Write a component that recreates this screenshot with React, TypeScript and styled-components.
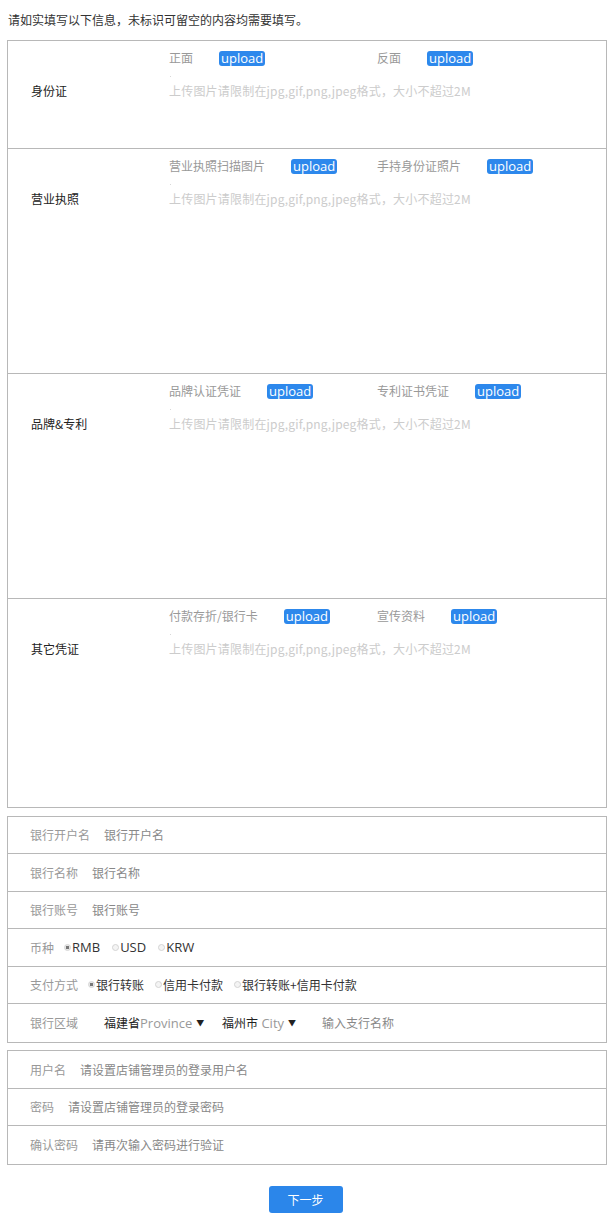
import React from "react";
import styled, { createGlobalStyle } from "styled-components";

const Global = createGlobalStyle`
  html, body { margin: 0; padding: 0; background: #fff; }
  body {
    font-family: "Microsoft YaHei", "Noto Sans CJK SC", "Noto Sans", sans-serif;
    font-size: 12px;
    color: #333;
  }
  * { box-sizing: border-box; }
`;

const Page = styled.div`
  width: 615px;
  padding: 12px 8px 0 7px;
`;

const Intro = styled.div`
  line-height: 16px;
  padding-left: 1px;
  margin-bottom: 12px;
  color: #333;
`;

const Panel = styled.div`
  border: 1px solid #b8b8b8;
  width: 600px;
  margin-bottom: 7.5px;
`;

const Section = styled.div<{ $h: number; $last?: boolean }>`
  display: grid;
  grid-template-columns: 161px 1fr;
  height: ${(p) => p.$h}px;
  border-bottom: ${(p) => (p.$last ? "none" : "1px solid #b8b8b8")};
`;

const SectionLabel = styled.div`
  padding-left: 23px;
  margin-top: 42px;
  line-height: 16px;
  color: #222;
`;

const SectionBody = styled.div`
  padding-top: 9px;
`;

const UploadRow = styled.div`
  display: flex;
  height: 16px;
  align-items: center;
`;

const UploadItem = styled.div`
  width: 208px;
  display: flex;
  align-items: center;
  gap: 26px;
`;

const ItemName = styled.span`
  color: #999;
  line-height: 16px;
`;

const UploadBtn = styled.span`
  display: inline-block;
  background: #2d88ec;
  color: #fff;
  font-family: "Open Sans", "Noto Sans", sans-serif;
  font-size: 13px;
  line-height: 15px;
  height: 15px;
  padding: 0 2px;
  border-radius: 3px;
`;

const Dot = styled.div`
  width: 1px;
  height: 1px;
  background: #d8d8d8;
  margin: 10px 0 6px 1px;
`;

const Hint = styled.div`
  color: #ccc;
  line-height: 16px;
  letter-spacing: 0.2px;
`;

const Row = styled.div<{ $h: number; $last?: boolean }>`
  display: flex;
  align-items: center;
  height: ${(p) => p.$h}px;
  padding-left: 22px;
  border-bottom: ${(p) => (p.$last ? "none" : "1px solid #b8b8b8")};
`;

const FieldLabel = styled.span<{ $gap?: number }>`
  color: #999;
  margin-right: ${(p) => p.$gap ?? 14}px;
`;

const FieldValue = styled.span`
  color: #888;
`;

const Radio = styled.span<{ $on?: boolean }>`
  display: inline-block;
  width: 7px;
  height: 7px;
  border-radius: 50%;
  border: 1px solid #d4d4d4;
  background: ${(p) => (p.$on ? "radial-gradient(circle, #777 0 1.6px, #e8e8e8 2px)" : "#f4f4f4")};
  margin-right: 1px;
`;

const Option = styled.span<{ $gap?: number }>`
  display: inline-flex;
  align-items: center;
  color: #333;
  margin-right: ${(p) => p.$gap ?? 12}px;
`;

const OptionText = styled.span<{ $latin?: boolean }>`
  font-family: ${(p) =>
    p.$latin ? '"Open Sans", "Noto Sans", sans-serif' : '"Noto Sans CJK SC", sans-serif'};
  font-size: ${(p) => (p.$latin ? "13px" : "12px")};
  color: #333;
`;

const Select = styled.span<{ $w: number }>`
  display: inline-flex;
  align-items: center;
  width: ${(p) => p.$w}px;
`;

const SelStrong = styled.span`
  color: #222;
`;

const SelLatin = styled.span`
  font-family: "Open Sans", "Noto Sans", sans-serif;
  font-size: 13px;
  color: #999;
`;

const Caret = styled.span`
  font-size: 8px;
  color: #222;
  margin-left: 4px;
`;

const Footer = styled.div`
  display: flex;
  justify-content: center;
  padding-top: 14px;
  padding-right: 3px;
`;

const NextBtn = styled.button`
  width: 74px;
  height: 27px;
  border: none;
  border-radius: 3px;
  background: #2b86ea;
  color: #fff;
  font-family: "Noto Sans CJK SC", sans-serif;
  font-size: 12px;
  padding: 0;
`;

type Doc = { label: string; h: number; items: [string, string] };

const docs: Doc[] = [
  { label: "身份证", h: 108, items: ["正面", "反面"] },
  { label: "营业执照", h: 225, items: ["营业执照扫描图片", "手持身份证照片"] },
  { label: "品牌&专利", h: 225, items: ["品牌认证凭证", "专利证书凭证"] },
  { label: "其它凭证", h: 208, items: ["付款存折/银行卡", "宣传资料"] },
];

const HINT = "上传图片请限制在jpg,gif,png,jpeg格式，大小不超过2M";

const BANK_H = 37.5;
const ACC_H = 37.5;

export default function App() {
  return (
    <>
      <Global />
      <Page>
        <Intro>请如实填写以下信息，未标识可留空的内容均需要填写。</Intro>
        <Panel>
          {docs.map((d, i) => (
            <Section key={d.label} $h={d.h} $last={i === docs.length - 1}>
              <SectionLabel>{d.label}</SectionLabel>
              <SectionBody>
                <UploadRow>
                  {d.items.map((it) => (
                    <UploadItem key={it}>
                      <ItemName>{it}</ItemName>
                      <UploadBtn>upload</UploadBtn>
                    </UploadItem>
                  ))}
                </UploadRow>
                <Dot />
                <Hint>{HINT}</Hint>
              </SectionBody>
            </Section>
          ))}
        </Panel>

        <Panel>
          <Row $h={BANK_H}>
            <FieldLabel>银行开户名</FieldLabel>
            <FieldValue>银行开户名</FieldValue>
          </Row>
          <Row $h={BANK_H}>
            <FieldLabel>银行名称</FieldLabel>
            <FieldValue>银行名称</FieldValue>
          </Row>
          <Row $h={BANK_H}>
            <FieldLabel>银行账号</FieldLabel>
            <FieldValue>银行账号</FieldValue>
          </Row>
          <Row $h={BANK_H}>
            <FieldLabel $gap={10}>币种</FieldLabel>
            <Option $gap={12}>
              <Radio $on />
              <OptionText $latin>RMB</OptionText>
            </Option>
            <Option $gap={12}>
              <Radio />
              <OptionText $latin>USD</OptionText>
            </Option>
            <Option>
              <Radio />
              <OptionText $latin>KRW</OptionText>
            </Option>
          </Row>
          <Row $h={BANK_H}>
            <FieldLabel $gap={10}>支付方式</FieldLabel>
            <Option $gap={11}>
              <Radio $on />
              <OptionText>银行转账</OptionText>
            </Option>
            <Option $gap={11}>
              <Radio />
              <OptionText>信用卡付款</OptionText>
            </Option>
            <Option>
              <Radio />
              <OptionText>银行转账+信用卡付款</OptionText>
            </Option>
          </Row>
          <Row $h={BANK_H} $last>
            <FieldLabel $gap={26}>银行区域</FieldLabel>
            <Select $w={118}>
              <SelStrong>福建省</SelStrong>
              <SelLatin>Province</SelLatin>
              <Caret>▼</Caret>
            </Select>
            <Select $w={100}>
              <SelStrong>福州市</SelStrong>
              <SelLatin>&nbsp;City</SelLatin>
              <Caret>▼</Caret>
            </Select>
            <FieldValue>输入支行名称</FieldValue>
          </Row>
        </Panel>

        <Panel>
          <Row $h={ACC_H}>
            <FieldLabel>用户名</FieldLabel>
            <FieldValue>请设置店铺管理员的登录用户名</FieldValue>
          </Row>
          <Row $h={ACC_H}>
            <FieldLabel>密码</FieldLabel>
            <FieldValue>请设置店铺管理员的登录密码</FieldValue>
          </Row>
          <Row $h={ACC_H} $last>
            <FieldLabel>确认密码</FieldLabel>
            <FieldValue>请再次输入密码进行验证</FieldValue>
          </Row>
        </Panel>

        <Footer>
          <NextBtn>下一步</NextBtn>
        </Footer>
      </Page>
    </>
  );
}
